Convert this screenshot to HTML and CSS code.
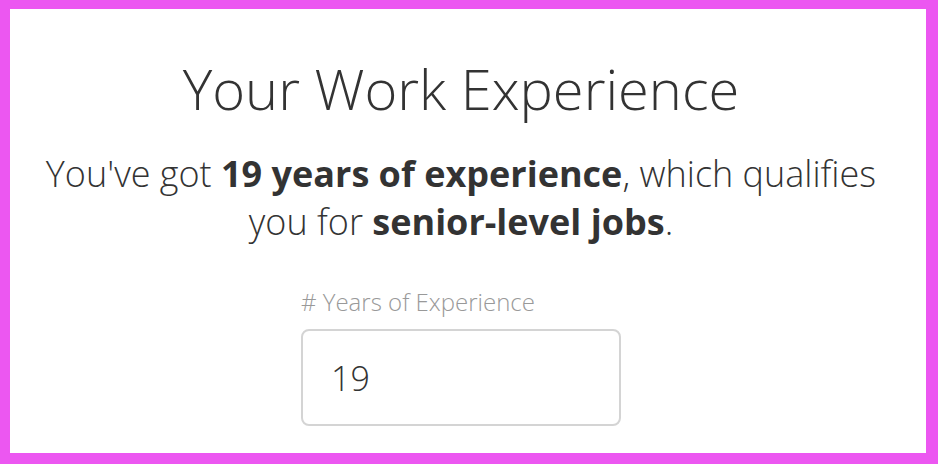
FILE: index.html
```html
<!DOCTYPE html>
<html lang="en">
<head>
<meta charset="utf-8">
<title>Your Work Experience</title>
<link rel="stylesheet" href="styles.css">
</head>
<body>
<div class="frame">
  <main class="content">
    <h1 class="title">Your Work Experience</h1>
    <p class="summary">You've got <strong>19 years of experience</strong>, which qualifies you for <strong>senior-level jobs</strong>.</p>
    <div class="field">
      <label class="field-label" for="years"># Years of Experience</label>
      <input class="field-input" id="years" type="text" value="19">
    </div>
  </main>
</div>
</body>
</html>
```

FILE: styles.css
```css
* { box-sizing: border-box; }
html, body { height: 100%; }
body {
  margin: 0;
  background: #ffffff;
  font-family: "Open Sans", "DejaVu Sans", sans-serif;
  color: #333333;
}
.frame {
  height: 100%;
  border-style: solid;
  border-color: #ec57f1;
  border-width: 9px 12px 11px 10px;
  background: #ffffff;
  overflow: hidden;
}
.content {
  padding: 44px 14px 0 0;
  text-align: center;
}
.title {
  margin: 0;
  font-size: 56px;
  font-weight: 300;
  line-height: 70px;
  color: #333333;
}
.summary {
  max-width: 860px;
  margin: 27px auto 0;
  font-size: 36px;
  font-weight: 300;
  line-height: 48px;
  color: #333333;
}
.summary strong { font-weight: 700; }
.field {
  width: 320px;
  margin: 41px auto 0;
  text-align: left;
  display: flex;
  flex-direction: column;
  gap: 12px;
}
.field-label {
  font-size: 24px;
  line-height: 30px;
  font-weight: 300;
  color: #999999;
}
.field-input {
  width: 320px;
  height: 97px;
  border: 2px solid #d4d4d4;
  border-radius: 8px;
  padding: 0 0 0 28px;
  font-family: "Open Sans", "DejaVu Sans", sans-serif;
  font-size: 34px;
  font-weight: 300;
  color: #333333;
  background: #ffffff;
  outline: none;
}
```
